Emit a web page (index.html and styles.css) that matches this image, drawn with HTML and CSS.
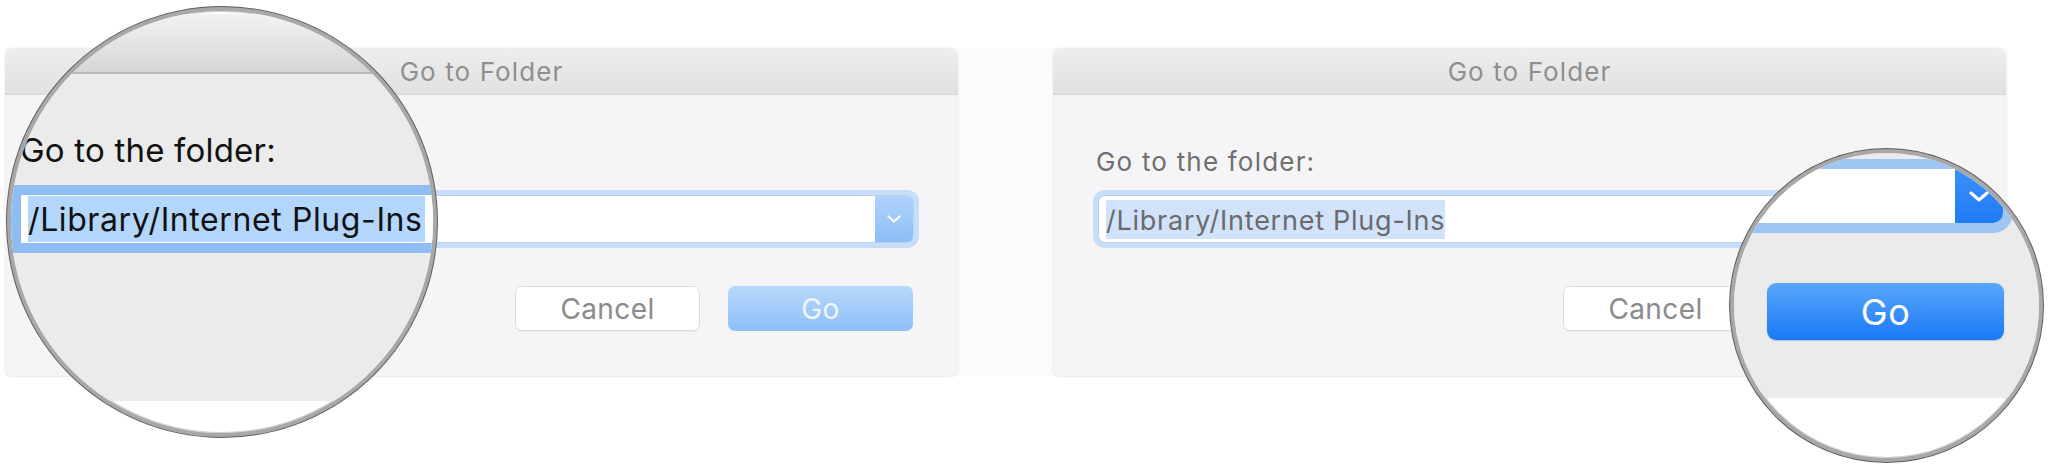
FILE: index.html
```html
<!DOCTYPE html>
<html lang="en">
<head>
<meta charset="utf-8">
<title>Go to Folder</title>
<link rel="stylesheet" href="styles.css">
</head>
<body>
<div class="stage">
  <div class="row">
    <section class="dialog">
      <header class="titlebar">Go to Folder</header>
      <div class="body">
        <div class="label under-lens">Go to the folder:</div>
        <div class="field">
          <div class="input"><span class="sel under-lens">/Library/Internet Plug-Ins</span></div>
          <div class="dropdown">
            <svg width="14" height="8" viewBox="0 0 14 8"><polyline points="1.5,1.5 7,6.5 12.5,1.5" fill="none" stroke="#fff" stroke-width="2.2" stroke-linecap="round" stroke-linejoin="round"/></svg>
          </div>
        </div>
        <div class="buttons">
          <button class="btn cancel">Cancel</button>
          <button class="btn go">Go</button>
        </div>
      </div>
    </section>
    <section class="dialog">
      <header class="titlebar">Go to Folder</header>
      <div class="body">
        <div class="label">Go to the folder:</div>
        <div class="field">
          <div class="input"><span class="sel">/Library/Internet Plug-Ins</span></div>
          <div class="dropdown">
            <svg width="14" height="8" viewBox="0 0 14 8"><polyline points="1.5,1.5 7,6.5 12.5,1.5" fill="none" stroke="#fff" stroke-width="2.2" stroke-linecap="round" stroke-linejoin="round"/></svg>
          </div>
        </div>
        <div class="buttons">
          <button class="btn cancel">Cancel</button>
          <button class="btn go"><span class="under-lens">Go</span></button>
        </div>
      </div>
    </section>
  </div>

  <div class="lens lens-left">
    <div class="lv">
      <div class="lv-title"></div>
      <div class="lv-body">
        <div class="lv-label">Go to the folder:</div>
        <div class="lv-field"><span class="lv-sel">/Library/Internet Plug-Ins</span></div>
      </div>
    </div>
  </div>

  <div class="lens lens-right">
    <div class="rv">
      <div class="rv-body">
        <div class="rv-field">
          <div class="rv-input"></div>
          <div class="rv-dropdown">
            <svg width="20" height="11" viewBox="0 0 20 11"><polyline points="2,2 10,9 18,2" fill="none" stroke="#fff" stroke-width="3" stroke-linecap="round" stroke-linejoin="round"/></svg>
          </div>
        </div>
        <div class="rv-go">Go</div>
      </div>
    </div>
  </div>
</div>
</body>
</html>
```
FILE: styles.css
```css
html, body {
  margin: 0;
  padding: 0;
}
body {
  width: 2048px;
  height: 468px;
  overflow: hidden;
  background: #ffffff;
  font-family: Inter, "Liberation Sans", "DejaVu Sans", sans-serif;
}
.stage {
  position: relative;
  height: 468px;
  padding-top: 48px;
  box-sizing: border-box;
}
.row {
  display: flex;
  gap: 95px;
  margin-left: 5px;
  width: 2003px;
  height: 328px;
  background: #fcfbfc;
}
.dialog {
  width: 953px;
  flex: none;
  height: 328px;
  background: #f5f4f6;
  border-radius: 8px 8px 6px 6px;
  box-shadow: 0 0 0 1px rgba(0, 0, 0, 0.035), 0 1px 1px rgba(0, 0, 0, 0.04);
  display: flex;
  flex-direction: column;
  overflow: hidden;
}
.titlebar {
  height: 47px;
  flex: none;
  box-sizing: border-box;
  border-bottom: 1px solid #d6d5d7;
  background: linear-gradient(#efeeef, #e2e1e2);
  display: flex;
  align-items: center;
  justify-content: center;
  font-size: 26px;
  letter-spacing: 1.1px;
  color: #8f8e90;
}
.body {
  flex: 1;
  padding: 0 45px 0 46px;
}
.label {
  margin-top: 52px;
  margin-left: -3px;
  font-size: 26px;
  line-height: 30px;
  letter-spacing: 1.2px;
  color: #6f6e70;
}
.under-lens {
  visibility: hidden;
}
.field {
  margin-top: 19px;
  display: flex;
  height: 46px;
  border-radius: 6px;
  background: #ffffff;
  box-shadow: 0 0 0 1px #b8d2f1, 0 0 0 6px #c8ddf7;
}
.input {
  flex: 1;
  padding-left: 7px;
  display: flex;
  align-items: center;
  border-radius: 6px 0 0 6px;
}
.sel {
  display: inline-block;
  background: #d0e3fa;
  font-size: 27px;
  line-height: 37px;
  letter-spacing: 0.75px;
  color: #6b6a6c;
  padding-top: 2px;
}
.dropdown {
  width: 38px;
  flex: none;
  background: linear-gradient(#b0d3fa, #8cbef7);
  border-radius: 0 6px 6px 0;
  display: flex;
  align-items: center;
  justify-content: center;
}
.buttons {
  margin-top: 44px;
  display: flex;
  justify-content: flex-end;
  gap: 28px;
}
.btn {
  width: 185px;
  height: 45px;
  box-sizing: border-box;
  border-radius: 7px;
  font-family: Inter, "Liberation Sans", sans-serif;
  font-size: 28px;
  letter-spacing: 0.4px;
  padding: 0;
}
.cancel {
  background: #ffffff;
  border: 1px solid #dddcde;
  color: #8b8a8c;
  box-shadow: 0 1px 1px rgba(0, 0, 0, 0.05);
}
.go {
  border: none;
  background: linear-gradient(#b8d8fb, #8dbff8);
  color: #eef5ff;
}

/* magnifier lenses */
.lens {
  position: absolute;
  border-radius: 50%;
  overflow: hidden;
  border: 4px solid #a8a8a8;
  box-shadow: 0 0 0 1px #5f5f5f, inset 0 0 0 1px #d2d2d2;
  background: #ffffff;
}
.lens-left {
  left: 7px;
  top: 7px;
  width: 422px;
  height: 422px;
}
.lens-right {
  left: 1730px;
  top: 149px;
  width: 305px;
  height: 305px;
}

/* left lens content: magnified top-left of the dialog */
.lv {
  position: absolute;
  left: -40px;
  top: 3px;
  width: 600px;
}
.lv-title {
  height: 58px;
  border-bottom: 2px solid #b7b7b7;
  border-radius: 12px 12px 0 0;
  background: linear-gradient(#f2f2f2, #d6d6d6);
}
.lv-body {
  height: 327px;
  background: #ebebeb;
  padding-left: 49px;
  overflow: hidden;
}
.lv-label {
  margin-top: 57px;
  font-size: 33px;
  line-height: 38px;
  letter-spacing: 0.2px;
  color: #111111;
}
.lv-field {
  margin-top: 26px;
  margin-left: 1px;
  height: 48px;
  background: #ffffff;
  box-shadow: 0 0 0 10px #8fbcf2;
  display: flex;
  align-items: center;
  padding-left: 7px;
}
.lv-sel {
  display: inline-block;
  background: #b3d6fd;
  font-size: 32px;
  line-height: 44px;
  letter-spacing: 0.6px;
  color: #111111;
  padding-top: 2px;
  padding-right: 2px;
}

/* right lens content: magnified dropdown and Go button */
.rv {
  position: absolute;
  left: -114px;
  top: -53px;
  width: 440px;
}
.rv-body {
  height: 298px;
  background: #ebebeb;
  overflow: hidden;
  padding-top: 69px;
  box-sizing: border-box;
}
.rv-field {
  display: flex;
  width: 383px;
  height: 54px;
  border-radius: 0 10px 10px 0;
  box-shadow: 0 0 0 10px #9fc5f3;
  background: #ffffff;
}
.rv-input {
  flex: 1;
}
.rv-dropdown {
  width: 48px;
  flex: none;
  background: linear-gradient(#3c90f8, #1f7bf5);
  border-radius: 0 10px 10px 0;
  display: flex;
  align-items: center;
  justify-content: center;
}
.rv-go {
  margin-top: 60px;
  margin-left: 147px;
  width: 237px;
  height: 57px;
  border-radius: 9px;
  background: linear-gradient(#5aa7fc, #1a79f5);
  box-shadow: 0 1px 1px rgba(0, 60, 160, 0.25);
  color: #ffffff;
  font-size: 36px;
  letter-spacing: 0.5px;
  display: flex;
  align-items: center;
  justify-content: center;
}
```
